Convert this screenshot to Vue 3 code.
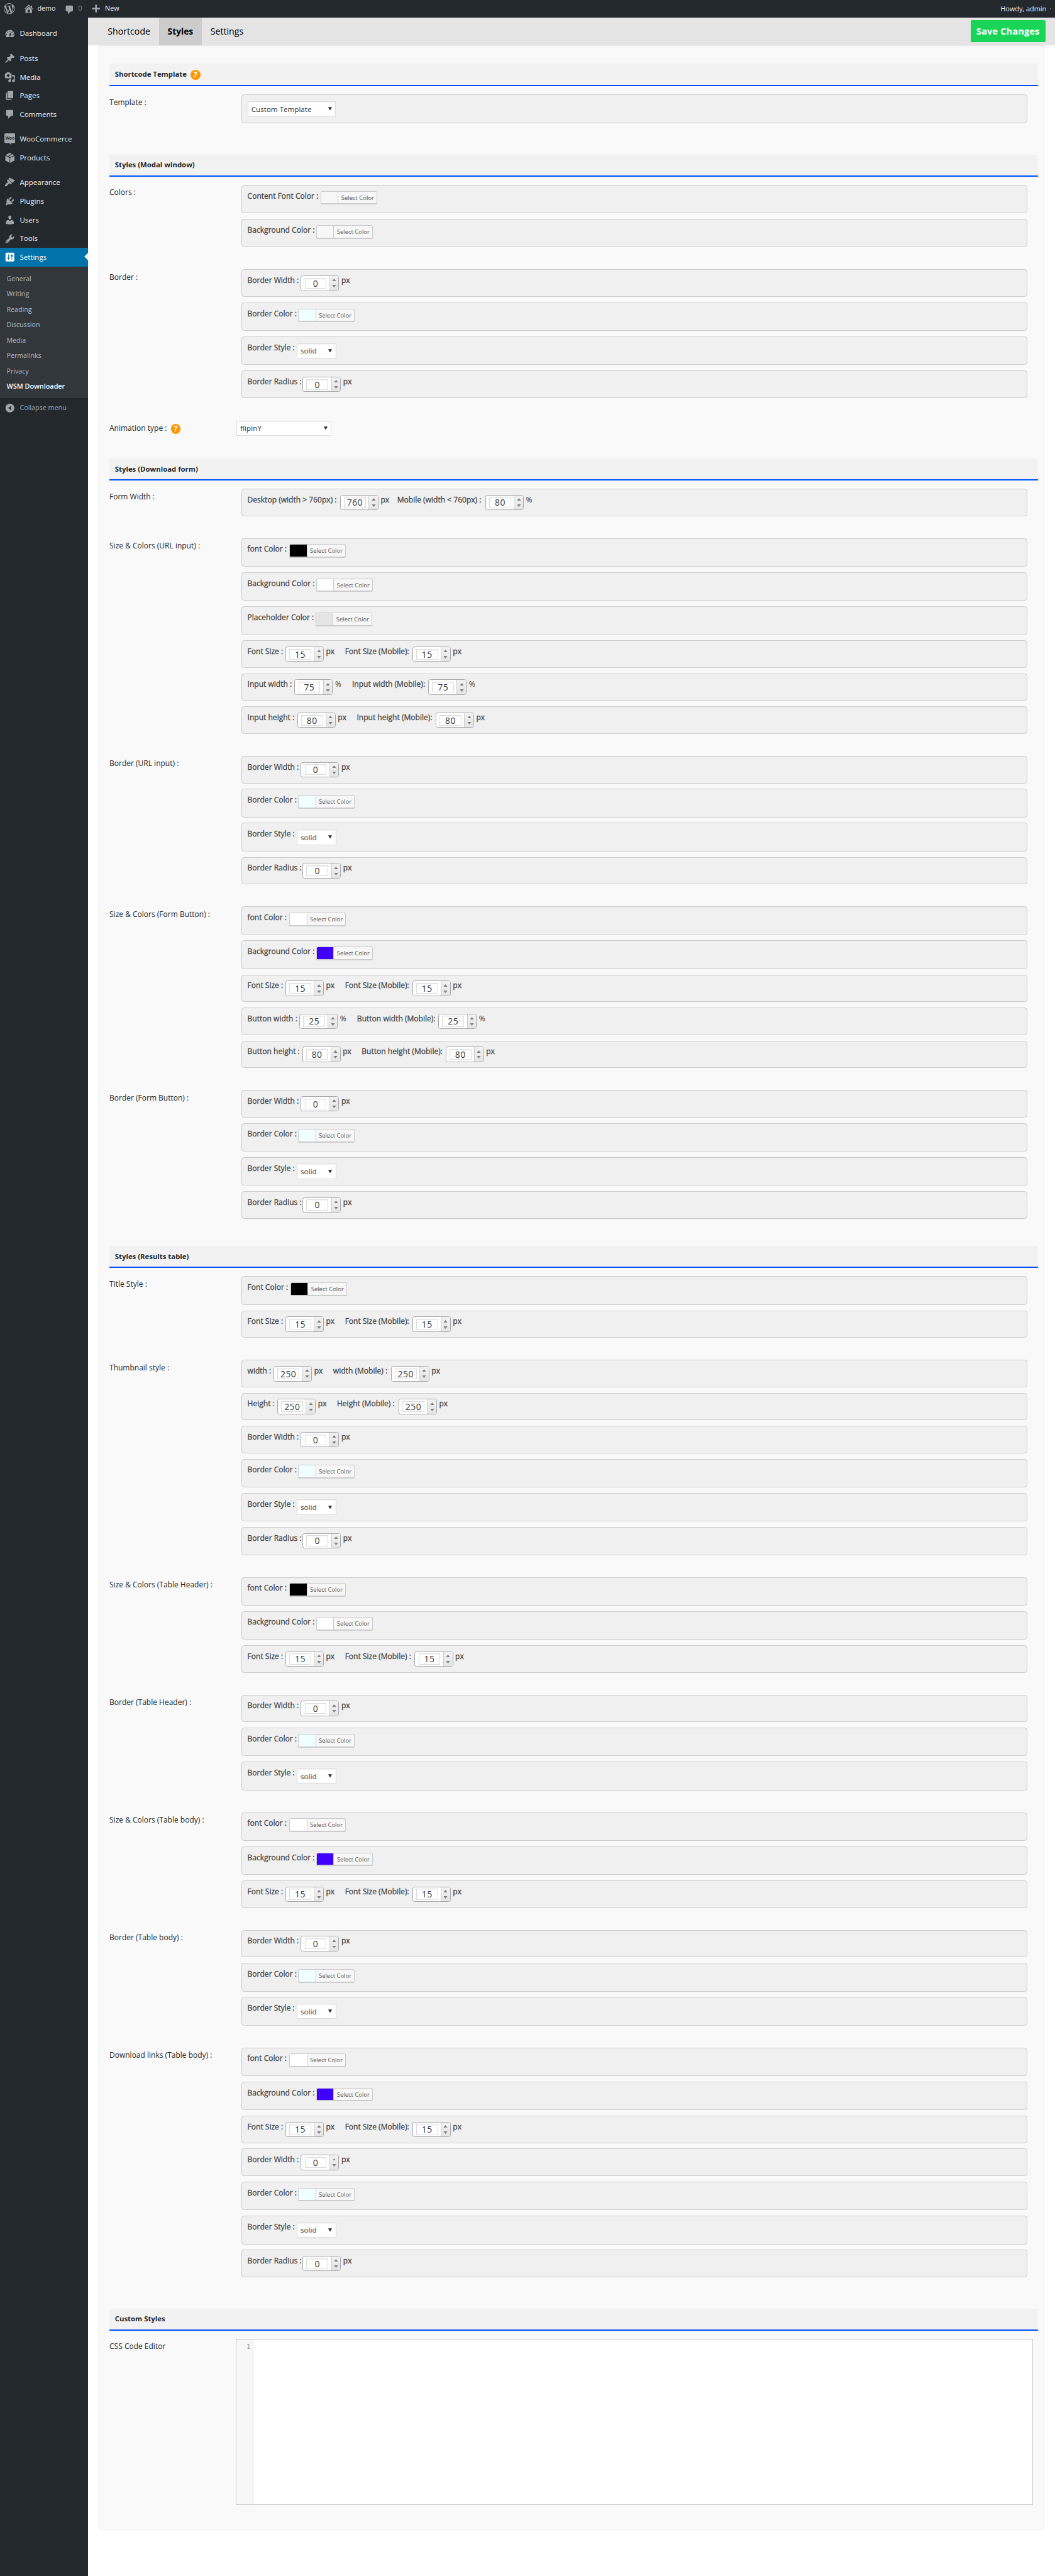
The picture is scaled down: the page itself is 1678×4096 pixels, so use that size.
<script setup>
const icons = {
  wp: 'M20 10c0-5.51-4.49-10-10-10C4.48 0 0 4.49 0 10c0 5.52 4.48 10 10 10 5.51 0 10-4.48 10-10zM7.78 15.37L4.37 6.22c.55-.02 1.17-.08 1.17-.08.5-.06.44-1.13-.06-1.11 0 0-1.45.11-2.37.11-.18 0-.37 0-.58-.01C4.12 2.69 6.87 1.11 10 1.11c2.33 0 4.45.87 6.05 2.34-.68-.11-1.65.39-1.65 1.58 0 .74.45 1.36.9 2.1.35.61.55 1.36.55 2.46 0 1.49-1.4 5-1.4 5l-3.03-8.37c.54-.02.82-.17.82-.17.5-.05.44-1.25-.06-1.22 0 0-1.44.12-2.38.12-.87 0-2.33-.12-2.33-.12-.5-.03-.56 1.2-.06 1.22l.92.08 1.26 3.41zM17.41 10c.24-.64.74-1.87.43-4.25.7 1.29 1.05 2.71 1.05 4.25 0 3.29-1.73 6.24-4.4 7.78.97-2.59 1.94-5.2 2.92-7.78zM6.1 18.09C3.12 16.65 1.11 13.53 1.11 10c0-1.3.23-2.48.72-3.59C3.25 10.3 4.67 14.2 6.1 18.09zm4.03-6.63l2.58 6.98c-.86.29-1.76.45-2.71.45-.79 0-1.57-.11-2.29-.33.81-2.38 1.62-4.74 2.42-7.1z',
  home: 'M16 8.5l1.53 1.53-1.06 1.06L10 4.6l-6.47 6.49-1.06-1.06L10 2.5l4 4v-2h2v4zm-6-2.46l6 5.99V18H4v-5.97zM12 17v-5H8v5h4z',
  plus: 'M17 8.5v3h-5.5V17h-3v-5.5H3v-3h5.5V3h3v5.5z',
  dashboard: 'M3.76 16h12.48c1.1-1.37 1.76-3.11 1.76-5 0-4.42-3.58-8-8-8s-8 3.58-8 8c0 1.89.66 3.63 1.76 5zM10 4c.55 0 1 .45 1 1s-.45 1-1 1-1-.45-1-1 .45-1 1-1zM6 6c.55 0 1 .45 1 1s-.45 1-1 1-1-.45-1-1 .45-1 1-1zm8 0c.55 0 1 .45 1 1s-.45 1-1 1-1-.45-1-1 .45-1 1-1zm-5.37 5.55L12 7v6c0 1.1-.9 2-2 2s-2-.9-2-2c0-.57.24-1.08.63-1.45zM4 10c.55 0 1 .45 1 1s-.45 1-1 1-1-.45-1-1 .45-1 1-1zm12 0c.55 0 1 .45 1 1s-.45 1-1 1-1-.45-1-1 .45-1 1-1zm-5 3c0-.55-.45-1-1-1s-1 .45-1 1 .45 1 1 1 1-.45 1-1z',
  posts: 'M10.44 3.02l1.82-1.82 6.36 6.35-1.83 1.82c-1.05-.68-2.48-.57-3.41.36l-.75.75c-.92.93-1.04 2.35-.35 3.41l-1.83 1.82-2.41-2.41-2.8 2.79c-.42.42-3.38 2.71-3.8 2.29s1.86-3.39 2.28-3.81l2.79-2.79L4.1 9.36l1.83-1.82c1.05.69 2.48.57 3.4-.36l.75-.75c.93-.92 1.05-2.35.36-3.41z',
  media: 'M13 11V4c0-.55-.45-1-1-1h-1.67L9 1H5L3.67 3H2c-.55 0-1 .45-1 1v7c0 .55.45 1 1 1h10c.55 0 1-.45 1-1zM7 4.5c1.38 0 2.5 1.12 2.5 2.5S8.38 9.5 7 9.5 4.5 8.38 4.5 7 5.62 4.5 7 4.5zM14 6h5v10.5c0 1.38-1.12 2.5-2.5 2.5S14 17.88 14 16.5s1.12-2.5 2.5-2.5c.17 0 .34.02.5.05V9h-3V6zm-4 8.05V13h2v3.5c0 1.38-1.12 2.5-2.5 2.5S7 17.88 7 16.5 8.12 14 9.5 14c.17 0 .34.02.5.05z',
  pages: 'M6 15V2h10v13H6zm-1 1h8v2H3V5h2v11z',
  comments: 'M5 2h9c1.1 0 2 .9 2 2v7c0 1.1-.9 2-2 2h-2l-5 5v-5H5c-1.1 0-2-.9-2-2V4c0-1.1.9-2 2-2z',
  products: 'M10 .8l3.1 1.9L6.2 7.3 2.2 5.3zM14.4 3.5L17.8 5.3 10.3 9.2 7.7 8zM1.7 6.5L9.5 10.3V19.6L1.7 15.2zM18.3 6.5V15.2L10.5 19.6V10.3z',
  appearance: 'M14.48 11.06L7.41 3.99l1.5-1.5c.5-.56 2.3-.47 3.51.32 1.21.8 1.43 1.28 2.91 2.1 1.18.64 2.45 1.26 4.45.85zm-.71.71L6.7 4.7 4.93 6.47c-.39.39-.39 1.02 0 1.41l1.06 1.06c.39.39.39 1.03 0 1.42-.6.6-1.43 1.11-2.21 1.69-.35.26-.7.53-1.01.84C1.43 14.23.4 16.08 1.4 17.07c.99 1 2.84-.03 4.18-1.36.31-.31.58-.66.85-1.02.57-.78 1.08-1.61 1.69-2.21.39-.39 1.02-.39 1.41 0l1.06 1.06c.39.39 1.02.39 1.41 0z',
  plugins: 'M13.11 4.36L9.87 7.6 8 5.73l3.24-3.24c.35-.34 1.05-.2 1.56.32.52.51.66 1.21.31 1.55zm-8 1.77l.91-1.12 9.01 9.01-1.19.84c-.71.71-2.63 1.16-3.82 1.16H6.14L4.9 17.26c-.59.59-1.54.59-2.12 0-.59-.58-.59-1.53 0-2.12l1.24-1.24v-3.88c0-1.13.4-3.19 1.09-3.89zm7.26 3.97l3.24-3.24c.34-.35 1.04-.21 1.55.31.52.51.66 1.21.31 1.55l-3.24 3.25z',
  users: 'M10 9.25c-2.27 0-2.73-3.44-2.73-3.44C7 4.02 7.82 2 9.97 2c2.16 0 2.98 2.02 2.71 3.81 0 0-.41 3.44-2.68 3.44zm0 2.57L12.72 10c2.39 0 4.52 2.33 4.52 4.53v2.49s-3.65 1.13-7.24 1.13c-3.65 0-7.24-1.13-7.24-1.13v-2.49c0-2.25 1.94-4.48 4.47-4.48z',
  tools: 'M16.68 9.77c-1.34 1.34-3.3 1.67-4.95.99l-5.41 6.52c-.99.99-2.59.99-3.58 0s-.99-2.59 0-3.57l6.52-5.42c-.68-1.65-.35-3.61.99-4.95 1.28-1.28 3.12-1.62 4.72-1.06l-2.89 2.89 2.82 2.82 2.86-2.87c.53 1.58.18 3.39-1.08 4.65zM3.81 16.21c.4.39 1.04.39 1.43 0 .4-.4.4-1.04 0-1.43-.39-.4-1.03-.4-1.43 0-.39.39-.39 1.03 0 1.43z',
  settings: 'M18 16V4c0-1.1-.9-2-2-2H4c-1.1 0-2 .9-2 2v12c0 1.1.9 2 2 2h12c1.1 0 2-.9 2-2zM8 11h1c.55 0 1 .45 1 1s-.45 1-1 1H8v1.5c0 .28-.22.5-.5.5s-.5-.22-.5-.5V13H6c-.55 0-1-.45-1-1s.45-1 1-1h1V5.5c0-.28.22-.5.5-.5s.5.22.5.5V11zm5-2h-1c-.55 0-1-.45-1-1s.45-1 1-1h1V5.5c0-.28.22-.5.5-.5s.5.22.5.5V7h1c.55 0 1 .45 1 1s-.45 1-1 1h-1v5.5c0 .28-.22.5-.5.5s-.5-.22-.5-.5V9z',
  collapse: 'M10 2c4.42 0 8 3.58 8 8s-3.58 8-8 8-8-3.58-8-8 3.58-8 8-8zM12.2 6L7 10l5.2 4z',
}

const menu = [
  [{ icon: 'dashboard', text: 'Dashboard' }],
  [
    { icon: 'posts', text: 'Posts' },
    { icon: 'media', text: 'Media' },
    { icon: 'pages', text: 'Pages' },
    { icon: 'comments', text: 'Comments' },
  ],
  [
    { icon: 'woo', text: 'WooCommerce' },
    { icon: 'products', text: 'Products' },
  ],
  [
    { icon: 'appearance', text: 'Appearance' },
    { icon: 'plugins', text: 'Plugins' },
    { icon: 'users', text: 'Users' },
    { icon: 'tools', text: 'Tools' },
    { icon: 'settings', text: 'Settings', current: true },
  ],
]
const submenu = ['General', 'Writing', 'Reading', 'Discussion', 'Media', 'Permalinks', 'Privacy', 'WSM Downloader']

// Row builders. `w` is the width reserved for the caption before its control.
const num = (...fields) => ({ kind: 'number', fields: fields.map(([label, w, value, unit = 'px']) => ({ label, w, value, unit })) })
const color = (label, w, value) => ({ kind: 'color', label, w, value })
const style = { kind: 'style', label: 'Border Style :', w: 85.5, value: 'solid' }
const bWidth = num(['Border Width :', 93, 0])
const bColor = color('Border Color :', 88.5, '#f0ffff')
const bRadius = num(['Border Radius :', 96.3, 0])
const fontSize = num(['Font Size :', 65, 15], ['Font Size (Mobile):', 118.5, 15])
const blueBg = color('Background Color :', 121.5, '#4000ff')

const sections = [
  {
    title: 'Shortcode Template', help: true, cls: 'first',
    groups: [{ label: 'Template :', rows: [{ kind: 'template', value: 'Custom Template' }] }],
  },
  {
    title: 'Styles (Modal window)', cls: 'modal',
    groups: [
      { label: 'Colors :', rows: [color('Content Font Color :', 129.5, '#f7f7f7'), color('Background Color :', 121.5, '#f7f7f7')] },
      { label: 'Border :', rows: [bWidth, bColor, style, bRadius] },
      { label: 'Animation type :', help: true, bare: 'flipInY', rows: [] },
    ],
  },
  {
    title: 'Styles (Download form)', cls: 'form',
    groups: [
      { label: 'Form Width :', rows: [{ ...num(['Desktop (width > 760px) :', 164.5, 760], ['Mobile (width < 760px) :', 156.5, 80, '%']), tight: true }] },
      {
        label: 'Size & Colors (URL input) :',
        rows: [
          color('font Color :', 72.5, '#000000'),
          color('Background Color :', 121.5, '#ffffff'),
          color('Placeholder Color :', 120.3, '#e5e5e5'),
          fontSize,
          num(['Input width :', 81.5, 75, '%'], ['Input width (Mobile):', 134.5, 75, '%']),
          num(['Input height :', 86.5, 80], ['Input height (Mobile):', 139.5, 80]),
        ],
      },
      { label: 'Border (URL input) :', rows: [bWidth, bColor, style, bRadius] },
      {
        label: 'Size & Colors (Form Button) :',
        rows: [
          color('font Color :', 72.5, '#ffffff'),
          blueBg,
          fontSize,
          num(['Button width :', 90.5, 25, '%'], ['Button width (Mobile):', 144, 25, '%']),
          num(['Button height :', 95.5, 80], ['Button height (Mobile):', 148.5, 80]),
        ],
      },
      { label: 'Border (Form Button) :', rows: [bWidth, bColor, style, bRadius] },
    ],
  },
  {
    title: 'Styles (Results table)', cls: 'results',
    groups: [
      { label: 'Title Style :', rows: [color('Font Color :', 74.5, '#000000'), fontSize] },
      {
        label: 'Thumbnail style :',
        rows: [
          num(['width :', 43.5, 250], ['width (Mobile) :', 101, 250]),
          num(['Height :', 50.5, 250], ['Height (Mobile) :', 108, 250]),
          bWidth, bColor, style, { ...bRadius, tall: true },
        ],
      },
      {
        label: 'Size & Colors (Table Header) :',
        rows: [
          color('font Color :', 72.5, '#000000'),
          color('Background Color :', 121.5, '#ffffff'),
          num(['Font Size :', 65, 15], ['Font Size (Mobile) :', 122.8, 15]),
        ],
      },
      { label: 'Border (Table Header) :', rows: [bWidth, bColor, style] },
      { label: 'Size & Colors (Table body) :', rows: [color('font Color :', 72.5, '#ffffff'), blueBg, fontSize] },
      { label: 'Border (Table body) :', rows: [bWidth, bColor, style] },
      {
        label: 'Download links (Table body) :',
        rows: [color('font Color :', 72.5, '#ffffff'), blueBg, fontSize, bWidth, bColor, style, bRadius],
      },
    ],
  },
]
</script>

<template>
  <div class="page">
    <header class="adminbar">
      <svg class="wp-logo" viewBox="0 0 20 20"><path :d="icons.wp" /></svg>
      <svg class="home" viewBox="0 0 20 20"><path fill-rule="evenodd" :d="icons.home" /></svg>
      <span class="bar-text">demo</span>
      <svg class="bubble" viewBox="0 0 20 20"><path :d="icons.comments" /></svg>
      <span class="bar-count">0</span>
      <svg class="plus" viewBox="0 0 20 20"><path :d="icons.plus" /></svg>
      <span class="bar-text">New</span>
      <span class="howdy">Howdy, admin</span>
      <i class="avatar-dot"></i>
    </header>

    <div class="body">
      <nav class="sidebar">
        <ul v-for="(block, b) in menu" :key="b" class="menu-block">
          <li v-for="item in block" :key="item.text" class="menu-item" :class="{ current: item.current }">
            <svg v-if="item.icon === 'woo'" class="menu-icon woo" viewBox="0 0 20 24">
              <path d="M2.5 1h15a2.5 2.5 0 0 1 2.5 2.5v13a2.5 2.5 0 0 1-2.5 2.5H12.800l-1 3-2.300-3h-7A2.500 2.500 0 0 1 0 16.500v-13A2.500 2.500 0 0 1 2.500 1z" />
              <text class="woo-text" x="10" y="12.500" text-anchor="middle">Woo</text>
            </svg>
            <svg v-else class="menu-icon" viewBox="0 0 20 20"><path fill-rule="evenodd" :d="icons[item.icon]" /></svg>
            <span>{{ item.text }}</span>
          </li>
        </ul>
        <ul class="submenu">
          <li v-for="item in submenu" :key="item" :class="{ active: item === 'WSM Downloader' }">{{ item }}</li>
        </ul>
        <div class="collapse">
          <svg class="menu-icon" viewBox="0 0 20 20"><path fill-rule="evenodd" :d="icons.collapse" /></svg>
          <span>Collapse menu</span>
        </div>
      </nav>

      <main class="content">
        <div class="tabs">
          <a class="tab">Shortcode</a>
          <a class="tab active">Styles</a>
          <a class="tab">Settings</a>
          <button class="save" type="button">Save Changes</button>
        </div>

        <div class="panel">
          <section v-for="s in sections" :key="s.title" :class="s.cls">
            <h3 class="heading"><span>{{ s.title }}</span><b v-if="s.help" class="help">?</b></h3>
            <div class="groups">
              <div v-for="g in s.groups" :key="g.label" class="group" :class="{ bare: g.bare }">
                <div class="group-label"><span>{{ g.label }}</span><b v-if="g.help" class="help">?</b></div>
                <div v-if="g.bare" class="select wide"><span>{{ g.bare }}</span><svg viewBox="0 0 8 7"><path d="M0 0h8L4 7z" /></svg></div>
                <div v-else class="rows">
                  <div v-for="(r, i) in g.rows" :key="i" class="row" :class="[r.kind, { tight: r.tight, tall: r.tall }]">
                    <template v-if="r.kind === 'number'">
                      <div v-for="f in r.fields" :key="f.label" class="field">
                        <span class="caption" :style="{ width: f.w + 'px' }">{{ f.label }}</span>
                        <span class="spinner">
                          <span class="well"><span class="digits">{{ f.value }}</span></span>
                          <span class="arrows">
                            <svg viewBox="0 0 8 5"><path d="M0 5h8L4 0z" /></svg>
                            <svg viewBox="0 0 8 5"><path d="M0 0h8L4 5z" /></svg>
                          </span>
                        </span>
                        <span class="unit" :class="{ percent: f.unit === '%' }">{{ f.unit }}</span>
                      </div>
                    </template>
                    <template v-else-if="r.kind === 'color'">
                      <span class="caption" :style="{ width: r.w + 'px' }">{{ r.label }}</span>
                      <span class="picker">
                        <i class="swatch" :style="{ background: r.value }"></i>
                        <span class="picker-text">Select Color</span>
                      </span>
                    </template>
                    <template v-else>
                      <span v-if="r.label" class="caption" :style="{ width: r.w + 'px' }">{{ r.label }}</span>
                      <span class="select"><span>{{ r.value }}</span><svg viewBox="0 0 8 7"><path d="M0 0h8L4 7z" /></svg></span>
                    </template>
                  </div>
                </div>
              </div>
            </div>
          </section>

          <section class="custom">
            <h3 class="heading"><span>Custom Styles</span></h3>
            <div class="groups">
              <div class="group">
                <div class="group-label"><span>CSS Code Editor</span></div>
                <div class="editor"><div class="gutter">1</div><div class="code"></div></div>
              </div>
            </div>
          </section>
        </div>
      </main>
    </div>
  </div>
</template>

<style>
html, body { margin: 0; background: #fff; }
</style>

<style scoped>
.page {
  zoom: 0.8741;
  width: 1920px;
  height: 4686px;
  display: flex;
  flex-direction: column;
  overflow: hidden;
  font-family: "Open Sans", "Noto Sans", sans-serif;
  font-size: 13.2px;
  color: #23282d;
  background: #fff;
}
.page *, .page *::before, .page *::after { box-sizing: border-box; }
ul { list-style: none; margin: 0; padding: 0; }

.adminbar {
  height: 32px;
  flex: none;
  display: flex;
  align-items: center;
  background: #23282d;
  color: #eee;
  font-size: 12.3px;
  line-height: 32px;
  white-space: nowrap;
}
.adminbar svg { fill: #a0a5aa; flex: none; width: 20px; height: 20px; }
.adminbar .wp-logo { margin-left: 7px; }
.adminbar .home { margin-left: 15px; margin-right: 6px; }
.adminbar .bubble { margin: 3px 6px 0 15px; width: 20px; }
.bar-text { color: #eee; }
.bar-count { color: #82878c; margin-right: 16px; }
.adminbar .plus { margin-right: 6px; }
.howdy { margin-left: auto; font-size: 12.5px; }
.avatar-dot { width: 2px; height: 2px; background: #82878c; margin: 0 8px 0 6px; }

.body { flex: 1; display: flex; min-height: 0; }

.sidebar { width: 160px; flex: none; padding-top: 12px; background: #23282d; color: #eee; }
.menu-block + .menu-block { margin-top: 11px; }
.menu-item, .collapse { position: relative; height: 34px; display: flex; align-items: center; padding-left: 8px; line-height: 34px; }
.menu-icon { width: 20px; height: 20px; flex: none; fill: #a0a5aa; margin-right: 8px; }
.menu-icon.woo { height: 24px; }
.woo-text { font-size: 7.5px; font-weight: 700; fill: #23282d; }
.menu-item.current { background: #0073aa; color: #fff; }
.menu-item.current .menu-icon { fill: #fff; }
.menu-item.current::after {
  content: "";
  position: absolute;
  right: 0;
  top: 9px;
  border: 8px solid transparent;
  border-left: 0;
  border-right-color: #f1f1f1;
}
.submenu { height: 239px; padding: 8px 0 7px 12px; background: #32373c; color: #b4b9be; font-size: 12.2px; line-height: 28px; }
.submenu li { height: 28px; }
.submenu .active { color: #fff; font-weight: 600; font-size: 12.4px; }
.collapse { color: #a0a5aa; font-size: 12.3px; margin-top: 1px; }

.content { flex: 1; min-width: 0; }
.tabs { height: 50px; display: flex; background: #e4e4e4; color: #000; font-size: 16.2px; line-height: 51px; }
.tab { padding: 0 16px; }
.tab:first-child { margin-left: 20px; width: 109px; }
.tab.active { width: 78px; background: #ccc; font-weight: 700; font-size: 15.8px; }
.save {
  width: 136px;
  height: 40px;
  margin: 5px 18px 0 auto;
  padding: 0;
  border: 0;
  border-radius: 3px;
  background: #18d558;
  color: #fff;
  font-family: inherit;
  font-size: 17px;
  font-weight: 700;
  line-height: 40px;
}

.panel { margin: 0 20px; height: 4519px; padding: 32px 10px 0 18px; border: 1px solid #e9e9e9; background: #f9f9f9; }
.heading {
  display: flex;
  align-items: center;
  height: 40px;
  margin: 0;
  padding: 0 0 1px 10px;
  background: #f2f2f2;
  border-bottom: 2.5px solid #0050ff;
  font-size: 13px;
  font-weight: 700;
}
.first .heading { height: 42px; }
.modal .heading { margin-top: 57px; }
.form .heading { margin-top: 41px; }
.results .heading { margin-top: 50px; }
.custom .heading { margin-top: 57px; }
.help {
  width: 18px;
  height: 18px;
  margin: 4px 0 0 7px;
  border-radius: 50%;
  background: #ff9800;
  color: #fff;
  font-size: 14px;
  font-weight: 700;
  line-height: 18px;
  text-align: center;
}

.groups { padding-top: 15px; display: flex; flex-direction: column; gap: 40px; }
.group { display: flex; align-items: flex-start; }
.group-label { width: 240px; flex: none; display: flex; align-items: center; padding-top: 3px; height: 25px; font-size: 13.7px; letter-spacing: 0.02px; line-height: 20px; white-space: nowrap; }
.group.bare { margin-top: 1px; }
.group.bare .group-label { width: 231px; padding-top: 2px; }
.rows { width: 1430px; display: flex; flex-direction: column; gap: 10px; }
.row { display: flex; align-items: flex-start; height: 52px; padding: 10px 0 0 10px; border: 1px solid #ccc; border-radius: 5px; background: #f0f0f0; color: #444; }
.row.number { height: 50px; gap: 19.5px; }
.row.number.tall { height: 51px; }
.row.tight { gap: 15px; }
.field { display: flex; align-items: flex-start; }
.caption, .unit { font-size: 13.8px; -webkit-text-stroke: 0.3px #444; line-height: 18px; white-space: nowrap; }
.caption { margin-right: 4px; flex: none; }
.unit { width: 15px; margin-left: 4px; }
.unit.percent { width: 11.5px; -webkit-text-stroke: 0; }

.spinner { width: 70px; height: 28px; display: flex; border: 1px solid #aaa; border-radius: 4px; background: #fff; overflow: hidden; }
.well { flex: 1; padding: 3px 5px 3px 6px; display: flex; }
.digits {
  flex: 1;
  border: 1px solid #ddd;
  box-shadow: inset 0 1px 2px rgba(0, 0, 0, 0.07);
  color: #32373c;
  font-size: 16px;
  letter-spacing: 0.5px;
  line-height: 19px;
  text-align: center;
}
.arrows { width: 17px; display: flex; flex-direction: column; align-items: center; justify-content: space-between; padding: 5px 0; border-left: 1px solid #ccc; background: linear-gradient(#f2f2f2, #e4e4e4); }
.arrows svg { width: 8px; height: 4.5px; fill: #808080; }

.picker { width: 103px; height: 25px; display: flex; border: 1px solid #ccc; border-bottom-width: 2.5px; border-radius: 3px; background: #f7f7f7; overflow: hidden; }
.swatch { width: 30px; flex: none; }
.picker-text { flex: 1; border-left: 1px solid #ccc; color: #555; font-size: 10.8px; line-height: 22px; text-align: center; white-space: nowrap; }

.select { width: 72px; height: 28px; display: flex; align-items: center; justify-content: space-between; padding: 0 6px; border: 1px solid #ddd; background: #fff; box-shadow: inset 0 1px 2px rgba(0, 0, 0, 0.07); color: #32373c; font-size: 13.3px; line-height: 26px; }
.select > span { padding-top: 2px; }
.select svg { width: 7px; height: 6.5px; fill: #23282d; }
.row .select { margin-top: 1px; }
.row.template .select { width: 161px; }
.select.wide { width: 173px; }

.editor { width: 1450px; height: 302px; margin-left: -10px; display: flex; border: 1px solid #ccc; background: #fff; }
.gutter { width: 31px; padding: 4px 4px 0 0; border-right: 1px solid #ddd; background: #f7f7f7; color: #999; font: 13px/19px "DejaVu Sans Mono", monospace; text-align: right; }
</style>
